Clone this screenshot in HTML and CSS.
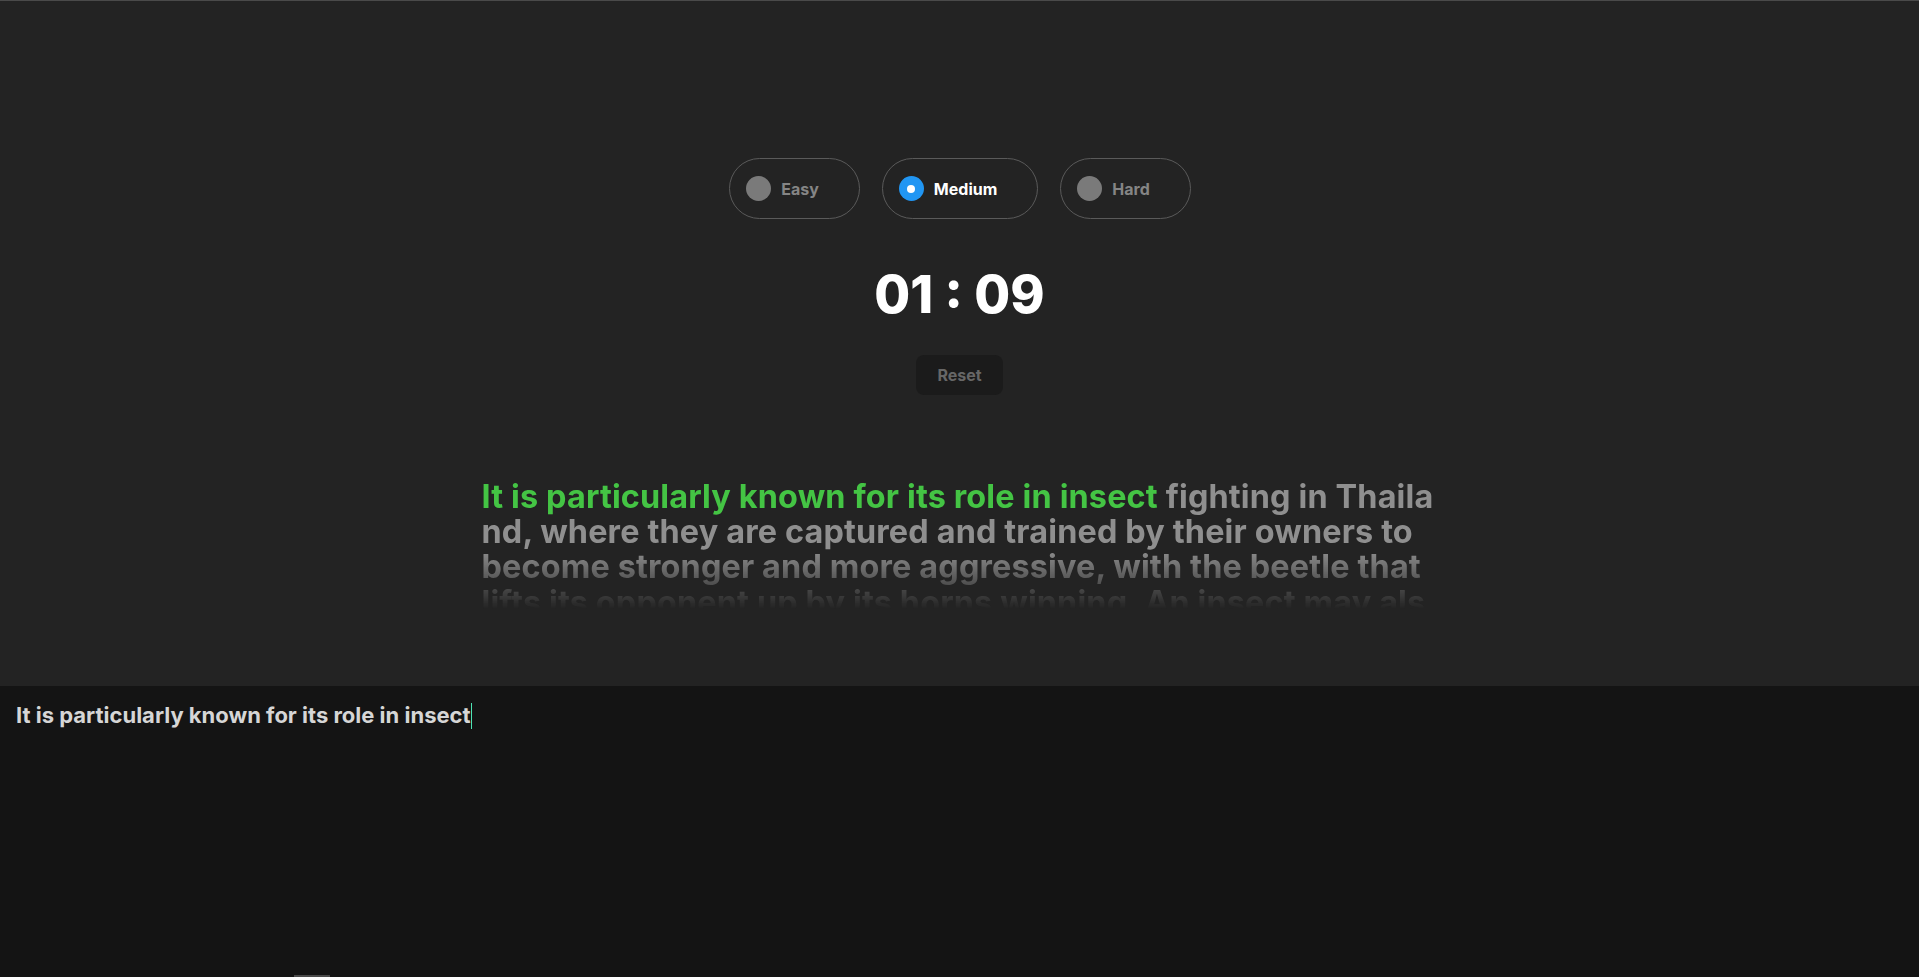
FILE: index.html
```html
<!DOCTYPE html>
<html lang="en">
<head>
<meta charset="utf-8">
<title>Typing Test</title>
<link rel="stylesheet" href="styles.css">
</head>
<body>
<div class="app">
  <section class="stage">
    <div class="levels">
      <label class="level"><span class="dot"></span><span class="level-name">Easy</span></label>
      <label class="level active"><span class="dot"></span><span class="level-name">Medium</span></label>
      <label class="level"><span class="dot"></span><span class="level-name">Hard</span></label>
    </div>
    <div class="timer">01 : 09</div>
    <button class="reset">Reset</button>
    <div class="passage"><span class="typed">It is particularly known for its role in insect</span> fighting in Thailand, where they are captured and trained by their owners to become stronger and more aggressive, with the beetle that lifts its opponent up by its horns winning. An insect may also be used in other types of contests as well.</div>
  </section>
  <section class="input-area">
    <div class="input-text">It is particularly known for its role in insect<span class="caret"></span></div>
    <div class="scroll-thumb"></div>
  </section>
</div>
</body>
</html>
```

FILE: styles.css
```css
html, body {
  margin: 0;
  padding: 0;
  height: 100%;
}

body {
  background: #232323;
  font-family: Inter, "Noto Sans", sans-serif;
  color: #fff;
  border-top: 1px solid #4a4a4a;
  box-sizing: border-box;
  overflow: hidden;
}

.app {
  height: 976px;
  display: flex;
  flex-direction: column;
}

.stage {
  height: 685px;
  display: flex;
  flex-direction: column;
  align-items: center;
  padding-top: 157px;
  box-sizing: border-box;
}

.levels {
  display: flex;
  gap: 22px;
  margin-left: 1px;
}

.level {
  height: 61px;
  box-sizing: border-box;
  border: 1px solid #5a5a5a;
  border-radius: 31px;
  display: flex;
  align-items: center;
  gap: 10px;
  padding: 0 40px 0 16px;
  font-size: 16px;
  font-weight: 700;
  color: #858585;
}

.dot {
  width: 25px;
  height: 25px;
  border-radius: 50%;
  background: #7a7a7a;
  display: flex;
  align-items: center;
  justify-content: center;
}

.level.active {
  color: #ffffff;
}

.level.active .dot {
  background: #2196f3;
}

.level.active .dot::after {
  content: "";
  width: 8px;
  height: 8px;
  border-radius: 50%;
  background: #ffffff;
}

.timer {
  margin-top: 44px;
  font-size: 52px;
  font-weight: 800;
  line-height: 63px;
  color: #ffffff;
}

.reset {
  margin-top: 29px;
  height: 40px;
  padding: 0 21px;
  border: none;
  border-radius: 8px;
  background: #1b1b1b;
  color: #676767;
  font-family: inherit;
  font-size: 16px;
  font-weight: 700;
}

.passage {
  margin-top: 84px;
  width: 956px;
  height: 141px;
  overflow: hidden;
  font-size: 32.4px;
  font-weight: 700;
  letter-spacing: 0.15px;
  line-height: 35.2px;
  color: #8f8f8f;
  word-break: break-all;
  -webkit-mask-image: linear-gradient(to bottom, #000 50%, transparent 92%);
  mask-image: linear-gradient(to bottom, #000 50%, transparent 92%);
}

.typed {
  color: #44c444;
}

.input-area {
  flex: 1;
  background: #141414;
  position: relative;
  padding: 16px 13px 16px 16px;
}

.input-text {
  font-size: 22px;
  font-weight: 700;
  color: #d6d6d6;
  line-height: 27px;
}

.caret {
  display: inline-block;
  width: 1px;
  height: 26px;
  background: #4de3b4;
  vertical-align: -6px;
}

.scroll-thumb {
  position: absolute;
  left: 294px;
  bottom: 0;
  width: 36px;
  height: 2px;
  background: #4a4a4a;
}
```
